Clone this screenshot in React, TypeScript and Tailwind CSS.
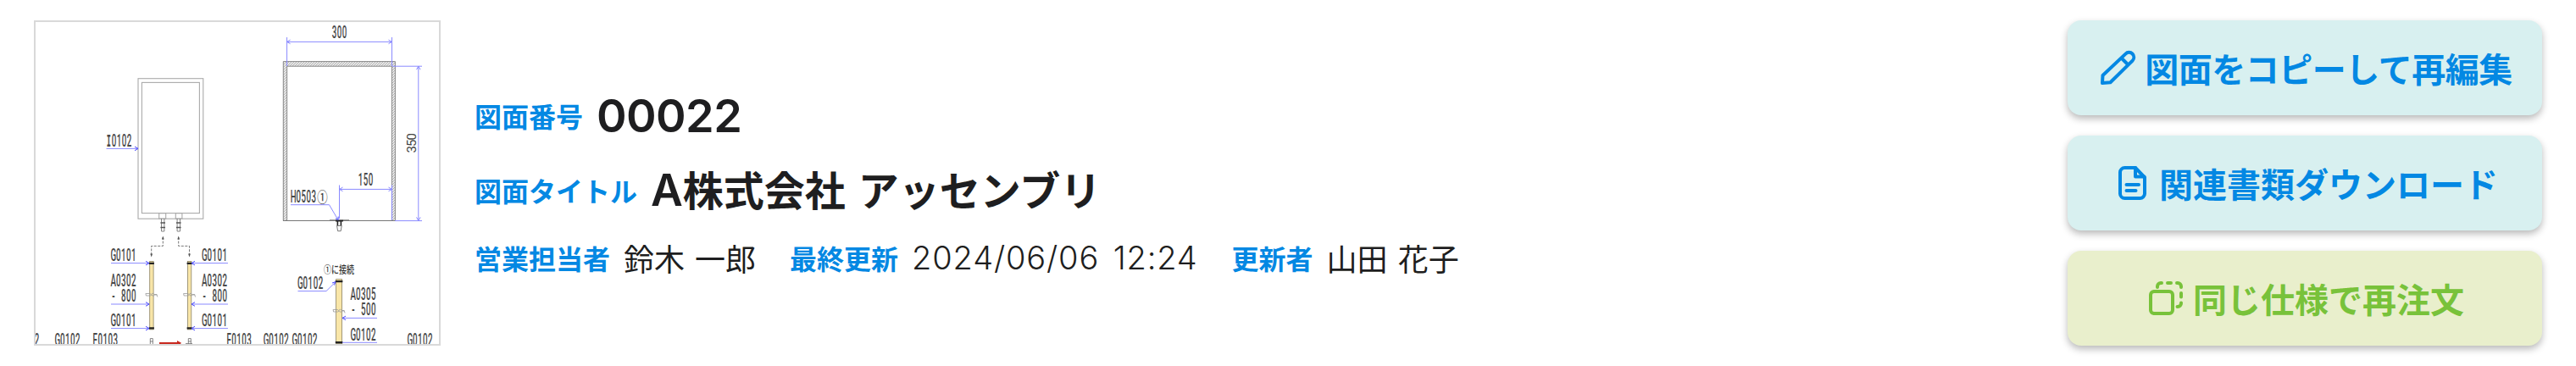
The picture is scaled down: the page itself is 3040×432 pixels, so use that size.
import React from 'react';

// Condensed, evenly pitched drafting label: one x position per character.
function Label({ x, y, children }: { x: number; y: number; children: string }) {
  const positions = Array.from(children, (_, i) => 5.2 + i * 12).join(' ');
  return (
    <text
      transform={`translate(${x} ${y}) scale(0.5 1)`}
      x={positions}
      textAnchor="middle"
      fontSize={19.5}
      fontWeight={500}
      fill="#484848"
    >
      {children}
    </text>
  );
}

function Arrow({ x, y, dir }: { x: number; y: number; dir: 'l' | 'r' | 'u' | 'd' }) {
  const d = {
    l: `M${x + 4} ${y - 2.3}L${x} ${y}l4 2.3`,
    r: `M${x - 4} ${y - 2.3}L${x} ${y}l-4 2.3`,
    u: `M${x - 2.3} ${y + 4}L${x} ${y}l2.3 4`,
    d: `M${x - 2.3} ${y - 4}L${x} ${y}l2.3 -4`,
  }[dir];
  return <path d={d} />;
}

function Hose({ x, y, w, h, mid }: { x: number; y: number; w: number; h: number; mid: number }) {
  const c = x + w / 2;
  return (
    <g>
      <rect x={x} y={y} width={w} height={h} fill="#f9e6a8" stroke="#8d8465" strokeWidth={0.8} />
      <path d={`M${x - 0.8} ${y + 2.5}h${w + 1.6}M${x - 0.8} ${y + h - 1.5}h${w + 1.6}`} stroke="#222" strokeWidth={2.4} />
      <path
        d={`M${c - 7} ${mid - 1.5}h5l1.5 1l2 -1.5l1.5 1.5h3l1 3M${c - 7} ${mid - 1.5}l.5 2.5h5l1.5 -1l2 1.5l1.5 -1.5h3`}
        fill="none"
        stroke="#999"
        strokeWidth={0.8}
      />
    </g>
  );
}

function Plug({ x, y }: { x: number; y: number }) {
  return (
    <g fill="none" stroke="#777" strokeWidth={0.9}>
      <path d={`M${x - 1.7} ${y}v15h3.4v-15`} />
      <path d={`M${x - 2.8} ${y + 5}h5.6M${x - 2.8} ${y + 10.5}h5.6`} stroke="#555" strokeWidth={1.3} />
    </g>
  );
}

function Drawing() {
  return (
    <svg
      viewBox="42 26 476 380"
      className="block h-full w-full font-['Roboto','Noto_Sans_CJK_JP',sans-serif]"
      role="img"
    >
      <defs>
        <pattern id="hatch" width="3" height="3" patternUnits="userSpaceOnUse">
          <rect width="3" height="3" fill="#e9e9e9" />
          <path d="M0 3L3 0" stroke="#999" strokeWidth="0.7" />
        </pattern>
      </defs>

      <g fill="none" stroke="#aaa" strokeWidth={1.1}>
        <rect x={163} y={92.7} width={76.8} height={165.5} />
        <rect x={167.4} y={97.4} width={68} height={154.2} />
        <rect x={187.7} y={251.6} width={8} height={6.6} />
        <rect x={207.3} y={251.6} width={7.6} height={6.6} />
      </g>
      <Plug x={192.2} y={258} />
      <Plug x={210.8} y={258} />

      <path
        d="M334.3 260.5V72.6H466.4V260.5H462.4V78.2H338.7V260.5Z"
        fill="url(#hatch)"
        stroke="#888"
        strokeWidth={1}
      />
      <path d="M334 260.5H466" stroke="#777" strokeWidth={1} />
      <path d="M389 260H412" stroke="#777" strokeWidth={1.4} />
      <path d="M396 260.6H405M398.4 261v6M402.4 261v6" stroke="#222" strokeWidth={1.6} />
      <path d="M397.6 266.5h5.6l-1 6.2h-3.6z" fill="#fff" stroke="#777" strokeWidth={1} />

      <g fill="none" stroke="#555" strokeWidth={0.8} strokeDasharray="3 1.5">
        <path d="M192.3 280V290.4H178.7V302" />
        <path d="M210.7 280V290.4H223.5V302" />
      </g>
      <g fill="#555">
        <path d="M192.3 278.5l1.4 4h-2.8zM210.7 278.5l1.4 4h-2.8zM178.7 303.5l1.4-4h-2.8zM223.5 303.5l1.4-4h-2.8z" />
      </g>

      <Hose x={176.7} y={308.4} w={4.4} h={80.5} mid={348} />
      <Hose x={221.4} y={308.4} w={4.4} h={80.5} mid={348} />
      <Hose x={396.6} y={329.6} w={7} h={76} mid={367} />

      <g fill="none" stroke="#8a8aff" strokeWidth={1}>
        <path d="M338.6 44V78M462.5 44V78M338.6 49.4H462.5" />
        <Arrow x={338.6} y={49.4} dir="l" />
        <Arrow x={462.5} y={49.4} dir="r" />
        <path d="M463 78.2H498M466 260.6H498M493.8 78.2V260.6" />
        <Arrow x={493.8} y={78.2} dir="u" />
        <Arrow x={493.8} y={260.4} dir="d" />
        <path d="M400.5 218.5V258M462.5 218.5V260M400.5 223.4H462.5" />
        <Arrow x={400.5} y={223.4} dir="l" />
        <Arrow x={462.5} y={223.4} dir="r" />
        <path d="M125.5 175.4H163M343 241.7H388.5L399 259.5" />
        <path d="M131 310.6H176M131 359H176M131 387.6H176" />
        <path d="M226 310.6H269M226 359H269M226 387.6H269" />
        <path d="M351.5 343.6H385L396 332.8M404 375.4H445M404 404.3H445" />
      </g>
      <g fill="none" stroke="#4a4aff" strokeWidth={1}>
        <Arrow x={163} y={175.4} dir="r" />
        {[310.6, 359, 387.6].map((y) => (
          <g key={y}>
            <Arrow x={176} y={y} dir="r" />
            <Arrow x={226} y={y} dir="l" />
          </g>
        ))}
        <Arrow x={404} y={375.4} dir="l" />
        <path d="M392 334l4-1.4l-1.6 4M396 257.8l3 1.8l.2-4" />
      </g>

      <Label x={392} y={45}>300</Label>
      <Label x={423} y={218.6}>150</Label>
      <text
        transform="translate(491 180.2) rotate(-90)"
        x="3.8 11.3 18.8"
        textAnchor="middle"
        fontSize={15}
        fill="#444"
      >
        350
      </text>
      <g className="font-['DejaVu_Sans_Mono',monospace]">
        <text transform="translate(126 172.6) scale(0.45 1)" x={5.4} textAnchor="middle" fontSize={19} fontWeight={700} fill="#484848">
          I
        </text>
      </g>
      <Label x={132} y={172.6}>0102</Label>
      <Label x={343.6} y={239.4}>H0503</Label>
      <text x={374.2} y={239.2} textLength={12.4} lengthAdjust="spacingAndGlyphs" fontSize={17} fontWeight={500} fill="#444" className="font-['Noto_Sans_CJK_JP',sans-serif]">
        ①
      </text>

      <Label x={131.2} y={308.2}>G0101</Label>
      <Label x={131.2} y={338.2}>A0302</Label>
      <Label x={131.2} y={356.4}>- 800</Label>
      <Label x={131.2} y={384.6}>G0101</Label>
      <Label x={238.6} y={308.2}>G0101</Label>
      <Label x={238.6} y={338.2}>A0302</Label>
      <Label x={238.6} y={356.4}>- 800</Label>
      <Label x={238.6} y={384.6}>G0101</Label>

      <text x={382} y={323} textLength={36} lengthAdjust="spacingAndGlyphs" fontSize={12.5} fontWeight={500} fill="#333">
        ①に接続
      </text>
      <Label x={351.8} y={341}>G0102</Label>
      <Label x={414.2} y={354.2}>A0305</Label>
      <Label x={414.2} y={372.4}>- 500</Label>
      <Label x={414.2} y={402.2}>G0102</Label>

      <Label x={41} y={408.2}>2</Label>
      <Label x={65.2} y={408.2}>G0102</Label>
      <Label x={109.7} y={408.2}>F0103</Label>
      <Label x={267.5} y={408.2}>F0103</Label>
      <Label x={311.5} y={408.2}>G0102</Label>
      <Label x={345.2} y={408.2}>G0102</Label>
      <Label x={481.2} y={408.2}>G0102</Label>

      <g fill="none" stroke="#777" strokeWidth={0.9}>
        <path d="M177.3 407V399.6H180.3V407M177 403h3.6M222.3 407V399.6H225.3V407M222 403h3.6M219 405.6h8" />
      </g>
      <path d="M188 404H209V402L214 404.8L212 407H188Z" fill="#c8281e" />
    </svg>
  );
}

function PencilIcon() {
  return (
    <svg viewBox="0 0 48 48" className="size-12 shrink-0" fill="none" stroke="currentColor" strokeWidth={4} strokeLinejoin="round">
      <path d="M6 42L6.5 33L33.4 7.6A5.6 5.6 0 0 1 41.6 15.6L15.5 41.3Z" />
      <path d="M28.5 12.5L36 20" />
    </svg>
  );
}

function DocumentIcon() {
  return (
    <svg viewBox="0 0 48 48" className="size-12 shrink-0" fill="none" stroke="currentColor" strokeWidth={4} strokeLinecap="round" strokeLinejoin="round">
      <path d="M28 6H15.500A5.500 5.500 0 0 0 10 11.500V36.500A5.500 5.500 0 0 0 15.500 42H33.500A5.500 5.500 0 0 0 39 36.500V17.500Z" />
      <path d="M28 6V16.500H38.500" />
      <path d="M17.500 26H32M17.500 33H28.500" />
    </svg>
  );
}

function DuplicateIcon() {
  return (
    <svg viewBox="0 0 48 48" className="size-12 shrink-0" fill="none" stroke="currentColor" strokeWidth={4} strokeLinecap="round" strokeLinejoin="round">
      <rect x={6} y={16} width={26} height={26} rx={4} />
      <path d="M14 11V10A4 4 0 0 1 18 6H19M26 6H30M37 6H38A4 4 0 0 1 42 10V11M42 18V22.500M42 29.500V30A4 4 0 0 1 38 34H37.500" />
    </svg>
  );
}

function ActionButton({ tone, icon, children }: { tone: string; icon: React.ReactNode; children: string }) {
  return (
    <button
      type="button"
      className={`flex h-28 w-140 items-center justify-center gap-2 rounded-2xl text-[40px] leading-none font-bold whitespace-nowrap shadow-[0_4px_8px_rgba(0,0,0,0.28)] ${tone}`}
    >
      {icon}
      <span>{children}</span>
    </button>
  );
}

function FieldLabel({ children }: { children: string }) {
  return <span className="text-[32px] leading-none font-bold text-[#0388e3]">{children}</span>;
}

export default function App() {
  return (
    <div className="flex h-[432px] w-[3040px] items-center bg-white px-10 font-['Noto_Sans_CJK_JP',sans-serif] text-[#1e1e20]">
      <div className="h-96 w-120 shrink-0 overflow-hidden border-2 border-[#d9d9d9] bg-white">
        <Drawing />
      </div>

      <div className="ml-10 flex flex-1 flex-col whitespace-nowrap">
        <div className="flex h-[88px] items-center gap-4">
          <FieldLabel>図面番号</FieldLabel>
          <span className="pt-0.5 font-['Inter',sans-serif] text-[54px] leading-none font-semibold tracking-[-0.6px]">00022</span>
        </div>
        <div className="flex h-[88px] items-center gap-4">
          <FieldLabel>図面タイトル</FieldLabel>
          <span className="text-[48px] leading-none font-bold [word-spacing:4px]">
            <span className="font-['Inter',sans-serif] text-[52px] leading-none font-semibold">A</span>
            株式会社 アッセンブリ
          </span>
        </div>
        <div className="flex h-[72px] items-center gap-10">
          <div className="flex items-center gap-4">
            <FieldLabel>営業担当者</FieldLabel>
            <span className="text-[36px] leading-none [word-spacing:4px]">鈴木 一郎</span>
          </div>
          <div className="flex items-center gap-4">
            <FieldLabel>最終更新</FieldLabel>
            <span className="font-['Inter',sans-serif] text-[38px] leading-none font-[350] tracking-[0.85px] [word-spacing:5px]">
              2024/06/06 12:24
            </span>
          </div>
          <div className="flex items-center gap-4">
            <FieldLabel>更新者</FieldLabel>
            <span className="text-[36px] leading-none [word-spacing:4px]">山田 花子</span>
          </div>
        </div>
      </div>

      <div className="flex shrink-0 flex-col gap-6">
        <ActionButton tone="bg-[#d8f0f0] text-[#0388e3] tracking-[-0.5px]" icon={<PencilIcon />}>
          図面をコピーして再編集
        </ActionButton>
        <ActionButton tone="bg-[#d8f0f0] text-[#0388e3]" icon={<DocumentIcon />}>
          関連書類ダウンロード
        </ActionButton>
        <ActionButton tone="bg-[#e9efcc] text-[#78c23a]" icon={<DuplicateIcon />}>
          同じ仕様で再注文
        </ActionButton>
      </div>
    </div>
  );
}
